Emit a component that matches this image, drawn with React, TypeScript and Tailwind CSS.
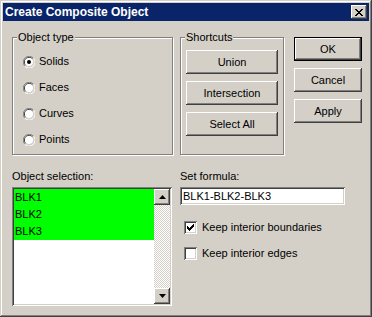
import React from "react";

/* ---------------- small win2k bits ---------------- */

const raised =
  "shadow-[inset_-1px_-1px_#404040,inset_1px_1px_#ffffff,inset_-2px_-2px_#808080,inset_2px_2px_#d4d0c8]";
const sunken =
  "shadow-[inset_1px_1px_#808080,inset_-1px_-1px_#ffffff,inset_2px_2px_#404040,inset_-2px_-2px_#d4d0c8]";

function Radio({ label, checked }: { label: string; checked?: boolean }) {
  return (
    <div className="flex items-center h-[13px]">
      <svg width="12" height="12" viewBox="0 0 12 12" className="shrink-0">
        <path d="M10.5 2.2 A5.5 5.5 0 0 0 1.8 10.2" fill="none" stroke="#808080" strokeWidth="1" />
        <path d="M9.6 3 A4.5 4.5 0 0 0 2.6 9.3" fill="none" stroke="#404040" strokeWidth="1" />
        <circle cx="6" cy="6" r="4" fill="#ffffff" />
        <path d="M1.8 10.2 A5.5 5.5 0 0 0 10.5 2.2" fill="none" stroke="#ffffff" strokeWidth="1" />
        <path d="M2.6 9.3 A4.5 4.5 0 0 0 9.6 3" fill="none" stroke="#d4d0c8" strokeWidth="1" />
        {checked && <circle cx="6" cy="6" r="2" fill="#000000" />}
      </svg>
      <span className="ml-[4px] leading-[13px]">{label}</span>
    </div>
  );
}

function Checkbox({ label, checked }: { label: string; checked?: boolean }) {
  return (
    <div className="flex items-center h-[13px]">
      <div className={`w-[13px] h-[13px] bg-white shrink-0 flex items-center justify-center ${sunken}`}>
        {checked && (
          <svg width="7" height="7" viewBox="0 0 7 7">
            <path d="M0 2h1v1h1v1h1V3h1V2h1V1h1V0h1v3H6v1H5v1H4v1H3v1H2V6H1V5H0z" fill="#000" />
          </svg>
        )}
      </div>
      <span className="ml-[5px] leading-[13px]">{label}</span>
    </div>
  );
}

function Button({ label, def }: { label: string; def?: boolean }) {
  if (def) {
    return (
      <div className="h-[24px] w-full border border-black">
        <div className={`h-full w-full flex items-center justify-center ${raised}`}>{label}</div>
      </div>
    );
  }
  return (
    <div className={`h-[24px] w-full flex items-center justify-center ${raised}`}>{label}</div>
  );
}

function Group({ title, className, children }: { title: string; className: string; children: React.ReactNode }) {
  return (
    <div
      className={`relative border border-[#808080] shadow-[1px_1px_#ffffff,inset_1px_1px_#ffffff] ${className}`}
    >
      <span className="absolute -top-[7px] left-[4px] px-[1px] bg-[#d4d0c8] leading-[13px]">{title}</span>
      {children}
    </div>
  );
}

function ScrollBtn({ up }: { up?: boolean }) {
  return (
    <div className={`w-[16px] h-[16px] bg-[#d4d0c8] flex items-center justify-center ${raised}`}>
      <svg width="7" height="4" viewBox="0 0 7 4">
        {up ? <path d="M3.5 0 L7 4 L0 4 Z" fill="#000" /> : <path d="M0 0 L7 0 L3.5 4 Z" fill="#000" />}
      </svg>
    </div>
  );
}

export default function App() {
  const items = ["BLK1", "BLK2", "BLK3"];

  return (
    <div
      className="w-[372px] h-[317px] bg-[#d4d0c8] p-[3px] flex flex-col text-[11px] text-black font-['Liberation_Sans',Arial,sans-serif]
      shadow-[inset_-1px_-1px_#404040,inset_1px_1px_#d4d0c8,inset_-2px_-2px_#808080,inset_2px_2px_#ffffff]"
    >
      {/* ===== title bar ===== */}
      <div className="h-[18px] bg-[#0a246a] flex items-center justify-between pl-[2px] pr-[2px]">
        <span className="text-white font-bold text-[12px] leading-[18px]">Create Composite Object</span>
        <div className={`w-[16px] h-[14px] bg-[#d4d0c8] flex items-center justify-center ${raised}`}>
          <svg width="8" height="7" viewBox="0 0 8 7">
            <path
              d="M0 0h2v1h1v1h2V1h1V0h2v1H7v1H6v1H5v1h1v1h1v1h1v1H6V6H5V5H3v1H2v1H0V6h1V5h1V4h1V3H2V2H1V1H0z"
              fill="#000"
            />
          </svg>
        </div>
      </div>

      {/* ===== content ===== */}
      <div className="flex-1 pl-[9px] pt-[16px]">
        {/* top row */}
        <div className="flex items-start">
          <Group title="Object type" className="w-[161px] h-[118px]">
            <div className="flex flex-col gap-[13px] pt-[17px] pl-[10px]">
              <Radio label="Solids" checked />
              <Radio label="Faces" />
              <Radio label="Curves" />
              <Radio label="Points" />
            </div>
          </Group>

          <Group title="Shortcuts" className="ml-[7px] w-[104px] h-[118px]">
            <div className="flex flex-col gap-[7px] pt-[12px] pl-[5px] w-[97px]">
              <Button label="Union" />
              <Button label="Intersection" />
              <Button label="Select All" />
            </div>
          </Group>

          <div className="ml-[10px] w-[68px] flex flex-col gap-[7px]">
            <Button label="OK" def />
            <Button label="Cancel" />
            <Button label="Apply" />
          </div>
        </div>

        {/* bottom row */}
        <div className="flex items-start mt-[15px]">
          <div className="w-[160px]">
            <div className="leading-[13px] h-[13px]">Object selection:</div>
            <div className={`mt-[4px] h-[119px] bg-white p-[2px] flex ${sunken}`}>
              <div className="flex-1 flex flex-col">
                {items.map((it) => (
                  <div key={it} className="h-[17px] bg-[#00ff00] pl-[1px] leading-[17px]">
                    {it}
                  </div>
                ))}
              </div>
              <div className="w-[16px] flex flex-col bg-[repeating-conic-gradient(#d4d0c8_0_25%,#ffffff_0_50%)] bg-[length:2px_2px]">
                <ScrollBtn up />
                <div className="flex-1" />
                <ScrollBtn />
              </div>
            </div>
          </div>

          <div className="ml-[8px] w-[165px]">
            <div className="leading-[13px] h-[13px]">Set formula:</div>
            <div className={`mt-[4px] h-[18px] bg-white pl-[3px] leading-[18px] ${sunken}`}>BLK1-BLK2-BLK3</div>
            <div className="flex flex-col gap-[13px] mt-[16px] pl-[4px]">
              <Checkbox label="Keep interior boundaries" checked />
              <Checkbox label="Keep interior edges" />
            </div>
          </div>
        </div>
      </div>
    </div>
  );
}
